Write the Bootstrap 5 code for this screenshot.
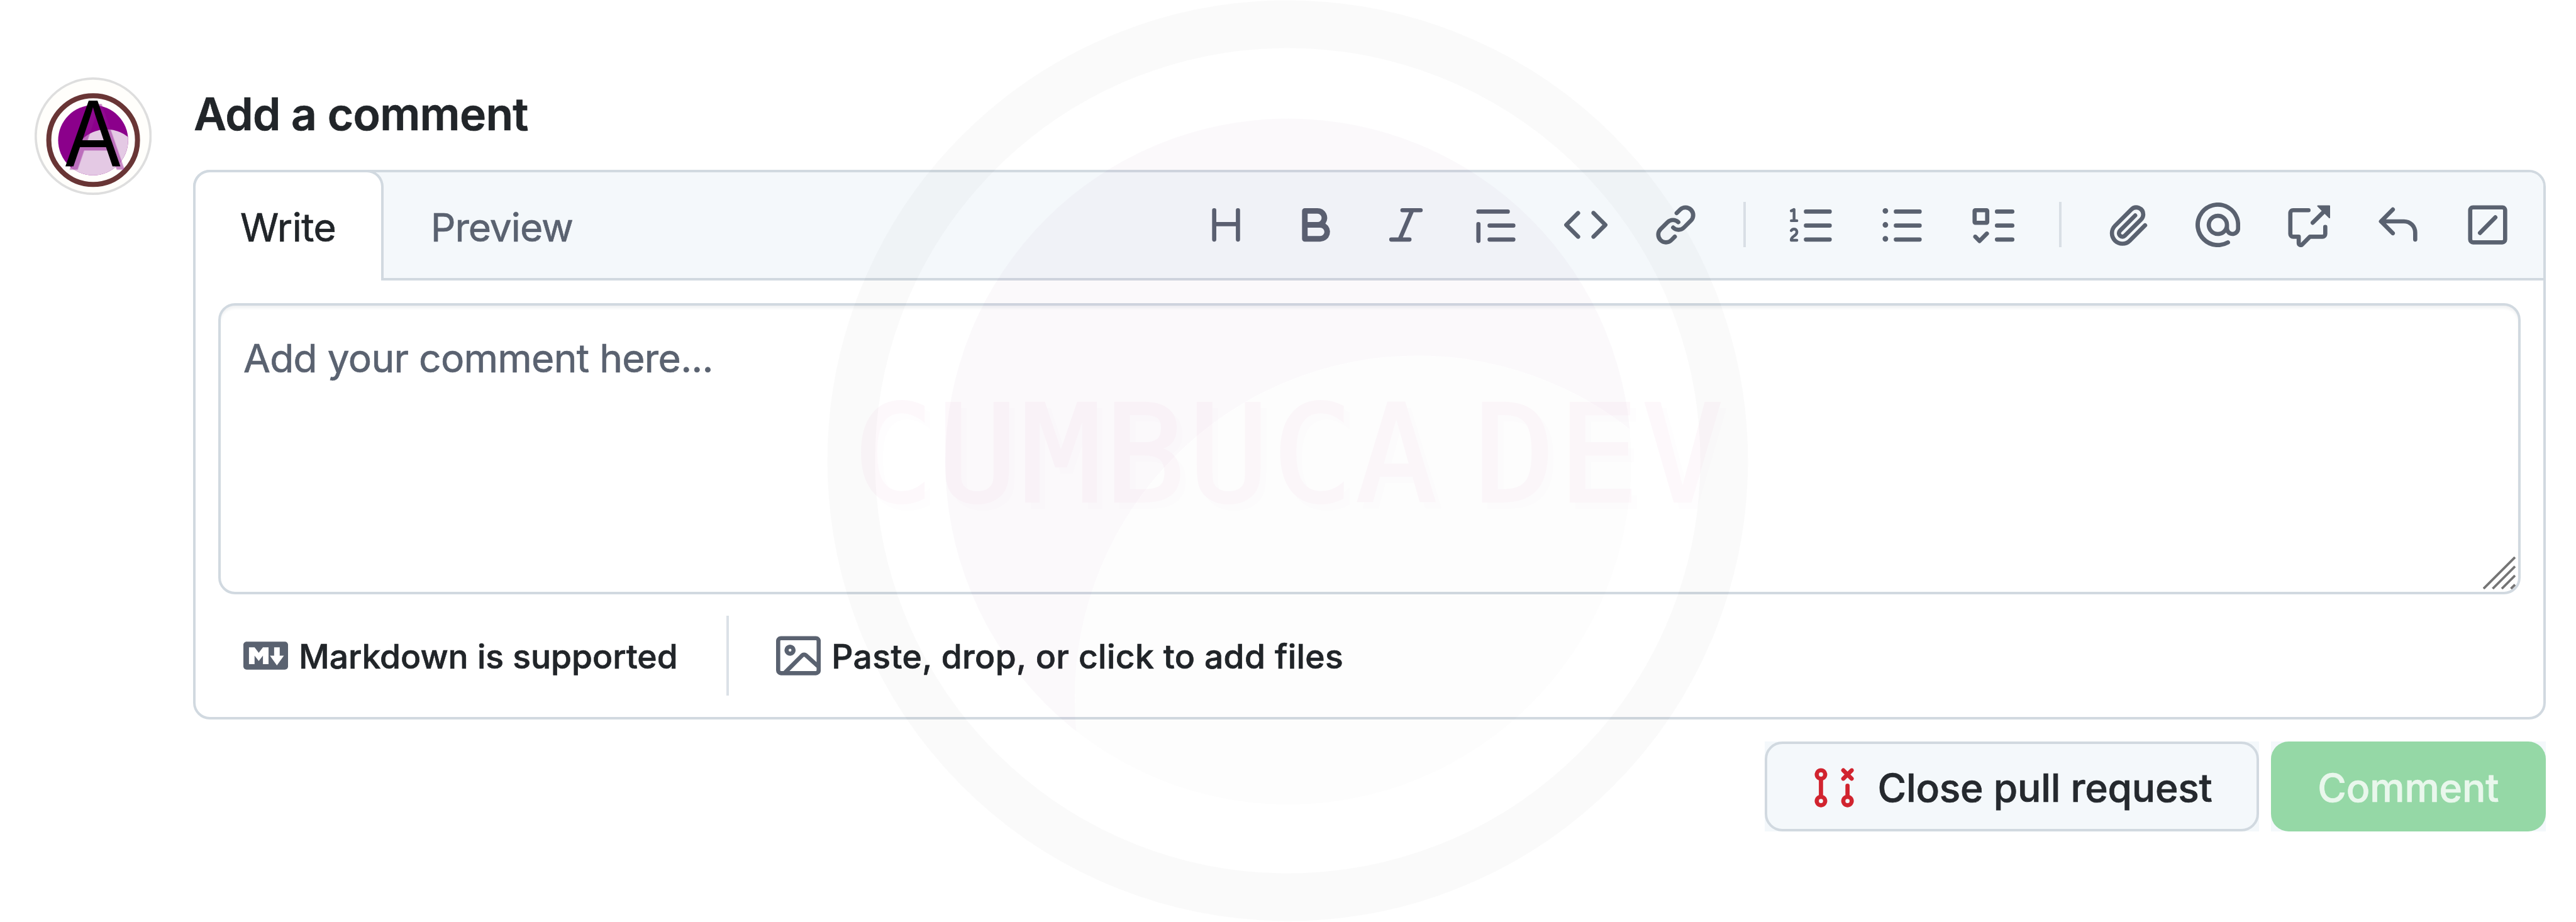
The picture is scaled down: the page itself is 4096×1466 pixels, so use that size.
<!DOCTYPE html>
<html lang="en">
<head>
<meta charset="utf-8">
<meta name="viewport" content="width=device-width, initial-scale=1">
<title>Add a comment</title>
<link href="https://cdn.jsdelivr.net/npm/bootstrap@5.3.0/dist/css/bootstrap.min.css" rel="stylesheet">
<style>
:root { --line: #d1d9e0; --ink: #212529; --mut: #5a6270; --band: #f4f8fb; }
body { font-family: Inter, "Noto Sans", sans-serif; font-size: 62.22px; line-height: 93.3px; color: var(--ink); background: #fff; height: 1466px; overflow: hidden; -webkit-text-stroke: .7px; }
svg { display: block; flex: none; }
.ico { width: 71.1px; height: 71.1px; fill: currentColor; }
.page-row { padding: 123.3px 48.4px 0 54.7px; gap: 65.7px; }
.avatar { width: 186.3px; height: 187.3px; }
.avatar-letter { filter: drop-shadow(10px 8px 0 rgba(148, 20, 148, .5)); }
.composer { min-width: 0; }
.title { font-size: 71.11px; font-weight: 600; line-height: 117.4px; letter-spacing: -.6px; margin: 0 0 29.3px 1.5px; color: var(--ink); }
.editor { border: 4px solid var(--line); border-radius: 26.7px; height: 873.6px; }
.editor-head { height: 172.4px; background: var(--band); border-bottom: 4px solid var(--line); border-radius: 22.7px 22.7px 0 0; }
.tab-write { width: 303px; margin: -4px 0 -4px -4px; border: 4px solid var(--line); border-bottom: 0; border-radius: 26.7px 26.7px 0 0; background: #fff; color: var(--ink); letter-spacing: -.5px; padding: 3px 0 0; }
.tab-preview { padding: 6.4px 0 0 75px; color: var(--mut); letter-spacing: -1px; background: none; border: 0; }
.tools { padding: 0 25.7px 2px 0; }
.tool-group { gap: 18.6px; }
.tool { width: 124.4px; height: 124.4px; padding: 0; border: 0; background: none; color: var(--mut); }
.tool-sep { width: 4px; height: 72px; background: #d9dfe5; margin: 0 43.5px 0 44.6px; }
.field { margin: 35.8px 35.2px 0 36.8px; height: 463px; }
.field textarea { resize: none; border: 4px solid var(--line); border-radius: 26.7px; padding: 36.7px 35.5px; font-size: 62.22px; line-height: 93.3px; letter-spacing: -.7px; box-shadow: inset 0 5px 4px -1px #f1f2f3; background: transparent; }
.field textarea::placeholder { color: var(--mut); opacity: 1; }
.grip { right: 8px; bottom: 8px; }
.editor-foot { height: 193.9px; padding-left: 76.3px; font-size: 53.33px; font-weight: 500; line-height: 80px; }
.foot-item { gap: 17px; }
.foot-item svg { color: var(--mut); }
.foot-item span { padding-top: 4px; }
.foot-sep { width: 4px; height: 127px; background: #dbe1e7; margin: 0 75.3px 0 77.2px; }
.drop { letter-spacing: .39px; }
.actions { margin-top: 35.8px; gap: 18.6px; }
.plate { background: var(--band); height: 142.2px; }
.plate .btn { height: 142.2px; border-radius: 28px; font-size: 62.22px; font-weight: 500; line-height: 93.3px; padding: 5px 0 0; }
.btn-close-pr { width: 786.7px; border: 4px solid var(--line); background: var(--band); color: #25292e; gap: 33.8px; letter-spacing: -.22px; --bs-btn-border-width: 4px; }
.btn-close-pr svg { color: #d1242f; }
.btn-send { width: 436.6px; border: 0; background: #95d8a6; color: #e9f7ec; letter-spacing: -.1px; }
.watermark { left: 0; top: 0; width: 4096px; height: 1466px; pointer-events: none; z-index: 5; }
.watermark-name { opacity: .025; }
.watermark-name text { filter: drop-shadow(9.5px 10px 0 rgba(120, 0, 130, .35)); }
</style>
</head>
<body class="position-relative">
<main class="d-flex align-items-start page-row">
  <svg class="avatar" viewBox="0 0 279.5 281">
    <defs><clipPath id="disc"><circle cx="139.7" cy="150" r="83.5"/></clipPath></defs>
    <ellipse cx="139.7" cy="140.3" rx="137" ry="137.4" fill="#fffefb" stroke="#dedede" stroke-width="5.6"/>
    <circle cx="139.7" cy="149.7" r="105.8" fill="#fffefb" stroke="#693535" stroke-width="12"/>
    <circle cx="139.7" cy="150" r="83.5" fill="#8b008b"/>
    <circle cx="171.5" cy="207.8" r="83.5" fill="#e4c9e4" clip-path="url(#disc)"/>
    <text class="avatar-letter" x="73.2" y="213.7" textLength="132" lengthAdjust="spacingAndGlyphs" font-family="Liberation Sans, sans-serif" font-size="229" fill="#000">A</text>
  </svg>

  <div class="composer flex-grow-1">
    <h2 class="title">Add a comment</h2>

    <section class="editor">
      <div class="editor-head d-flex">
        <button class="tab-write text-center" type="button">Write</button>
        <button class="tab-preview" type="button">Preview</button>
        <div class="tools d-flex align-items-center ms-auto">
          <div class="tool-group d-flex">
            <button class="tool d-flex align-items-center justify-content-center" type="button" aria-label="Heading"><svg class="ico" viewBox="0 0 16 16"><path d="M3.75 2a.75.75 0 0 1 .75.75V7h7V2.75a.75.75 0 0 1 1.5 0v10.5a.75.75 0 0 1-1.5 0V8.5h-7v4.75a.75.75 0 0 1-1.5 0V2.75A.75.75 0 0 1 3.75 2Z"/></svg></button>
            <button class="tool d-flex align-items-center justify-content-center" type="button" aria-label="Bold"><svg class="ico" viewBox="0 0 16 16"><path d="M4 2h4.5a3.501 3.501 0 0 1 2.852 5.53A3.499 3.499 0 0 1 9.5 14H4a1 1 0 0 1-1-1V3a1 1 0 0 1 1-1Zm1 7v3h4.5a1.5 1.5 0 0 0 0-3Zm3.5-2a1.5 1.5 0 0 0 0-3H5v3Z"/></svg></button>
            <button class="tool d-flex align-items-center justify-content-center" type="button" aria-label="Italic"><svg class="ico" viewBox="0 0 16 16"><path d="M6 2.75A.75.75 0 0 1 6.75 2h6.5a.75.75 0 0 1 0 1.5h-2.505l-3.858 9H9.25a.75.75 0 0 1 0 1.5h-6.5a.75.75 0 0 1 0-1.5h2.505l3.858-9H6.75A.75.75 0 0 1 6 2.75Z"/></svg></button>
            <button class="tool d-flex align-items-center justify-content-center" type="button" aria-label="Quote"><svg class="ico" viewBox="0 0 16 16"><path d="M1.75 2.5h10.5a.75.75 0 0 1 0 1.5H1.75a.75.75 0 0 1 0-1.5Zm4 5h8.5a.75.75 0 0 1 0 1.5h-8.5a.75.75 0 0 1 0-1.5Zm0 5h8.5a.75.75 0 0 1 0 1.5h-8.5a.75.75 0 0 1 0-1.5ZM2.5 7.75v6a.75.75 0 0 1-1.5 0v-6a.75.75 0 0 1 1.5 0Z"/></svg></button>
            <button class="tool d-flex align-items-center justify-content-center" type="button" aria-label="Code"><svg class="ico" viewBox="0 0 16 16"><path d="m11.28 3.22 4.25 4.25a.75.75 0 0 1 0 1.06l-4.25 4.25a.749.749 0 0 1-1.275-.326.749.749 0 0 1 .215-.734L13.94 8l-3.72-3.72a.749.749 0 0 1 .326-1.275.749.749 0 0 1 .734.215Zm-6.56 0a.751.751 0 0 1 1.042.018.751.751 0 0 1 .018 1.042L2.06 8l3.72 3.72a.749.749 0 0 1-.326 1.275.749.749 0 0 1-.734-.215L.47 8.53a.75.75 0 0 1 0-1.06Z"/></svg></button>
            <button class="tool d-flex align-items-center justify-content-center" type="button" aria-label="Link"><svg class="ico" viewBox="0 0 16 16"><path d="m7.775 3.275 1.25-1.25a3.5 3.5 0 1 1 4.95 4.95l-2.5 2.5a3.5 3.5 0 0 1-4.95 0 .751.751 0 0 1 .018-1.042.751.751 0 0 1 1.042-.018 1.998 1.998 0 0 0 2.83 0l2.5-2.5a2.002 2.002 0 0 0-2.83-2.83l-1.25 1.25a.751.751 0 0 1-1.042-.018.751.751 0 0 1-.018-1.042Zm-4.69 9.64a1.998 1.998 0 0 0 2.83 0l1.25-1.25a.751.751 0 0 1 1.042.018.751.751 0 0 1 .018 1.042l-1.25 1.25a3.5 3.5 0 1 1-4.95-4.95l2.5-2.5a3.5 3.5 0 0 1 4.95 0 .751.751 0 0 1-.018 1.042.751.751 0 0 1-1.042.018 1.998 1.998 0 0 0-2.83 0l-2.5 2.5a1.998 1.998 0 0 0 0 2.83Z"/></svg></button>
          </div>
          <div class="tool-sep"></div>
          <div class="tool-group d-flex">
            <button class="tool d-flex align-items-center justify-content-center" type="button" aria-label="Numbered list"><svg class="ico" viewBox="0 0 16 16"><path d="M5 3.25a.75.75 0 0 1 .75-.75h8.5a.75.75 0 0 1 0 1.5h-8.5A.75.75 0 0 1 5 3.25Zm0 5a.75.75 0 0 1 .75-.75h8.5a.75.75 0 0 1 0 1.5h-8.5A.75.75 0 0 1 5 8.25Zm0 5a.75.75 0 0 1 .75-.75h8.5a.75.75 0 0 1 0 1.5h-8.5a.75.75 0 0 1-.75-.75ZM.924 10.32a.5.5 0 0 1-.851-.525l.001-.001.001-.002.002-.004.007-.011c.097-.144.215-.273.348-.384.228-.19.588-.392 1.068-.392.468 0 .858.181 1.126.484.259.294.377.673.377 1.038 0 .987-.686 1.495-1.156 1.845l-.047.035c-.303.225-.522.4-.654.597h1.357a.5.5 0 0 1 0 1H.5a.5.5 0 0 1-.5-.5c0-1.005.692-1.52 1.167-1.875l.035-.025c.531-.396.8-.625.8-1.078a.57.57 0 0 0-.128-.376C1.806 10.068 1.695 10 1.5 10a.658.658 0 0 0-.429.163.835.835 0 0 0-.144.153ZM2.003 2.5V6h.503a.5.5 0 0 1 0 1H.5a.5.5 0 0 1 0-1h.503V3.308l-.28.14a.5.5 0 0 1-.446-.895l1.003-.5a.5.5 0 0 1 .723.447Z"/></svg></button>
            <button class="tool d-flex align-items-center justify-content-center" type="button" aria-label="Unordered list"><svg class="ico" viewBox="0 0 16 16"><path d="M5.75 2.5h8.5a.75.75 0 0 1 0 1.5h-8.5a.75.75 0 0 1 0-1.5Zm0 5h8.5a.75.75 0 0 1 0 1.5h-8.5a.75.75 0 0 1 0-1.5Zm0 5h8.5a.75.75 0 0 1 0 1.5h-8.5a.75.75 0 0 1 0-1.5ZM2 14a1 1 0 1 1 0-2 1 1 0 0 1 0 2Zm1-6a1 1 0 1 1-2 0 1 1 0 0 1 2 0ZM2 4a1 1 0 1 1 0-2 1 1 0 0 1 0 2Z"/></svg></button>
            <button class="tool d-flex align-items-center justify-content-center" type="button" aria-label="Task list"><svg class="ico" viewBox="0 0 16 16"><path d="M2 2h4a1 1 0 0 1 1 1v4a1 1 0 0 1-1 1H2a1 1 0 0 1-1-1V3a1 1 0 0 1 1-1Zm4.655 8.595a.75.75 0 0 1 0 1.06L4.03 14.28a.75.75 0 0 1-1.06 0l-1.5-1.5a.749.749 0 0 1 .326-1.275.749.749 0 0 1 .734.215l.97.97 2.095-2.095a.75.75 0 0 1 1.06 0ZM9.75 2.5h5.5a.75.75 0 0 1 0 1.5h-5.5a.75.75 0 0 1 0-1.5Zm0 5h5.5a.75.75 0 0 1 0 1.5h-5.5a.75.75 0 0 1 0-1.5Zm0 5h5.5a.75.75 0 0 1 0 1.5h-5.5a.75.75 0 0 1 0-1.5Zm-7.25-9v3h3v-3Z"/></svg></button>
          </div>
          <div class="tool-sep"></div>
          <div class="tool-group d-flex">
            <button class="tool d-flex align-items-center justify-content-center" type="button" aria-label="Attach files"><svg class="ico" viewBox="0 0 16 16"><path d="M12.212 3.02a1.753 1.753 0 0 0-2.478.003l-5.83 5.83a3.007 3.007 0 0 0-.88 2.127c0 .795.315 1.551.88 2.116.567.567 1.333.89 2.126.89.79 0 1.548-.321 2.116-.89l5.48-5.48a.75.75 0 0 1 1.061 1.06l-5.48 5.48a4.492 4.492 0 0 1-3.177 1.33c-1.2 0-2.345-.487-3.187-1.33a4.483 4.483 0 0 1-1.32-3.177c0-1.195.475-2.341 1.32-3.186l5.83-5.83a3.25 3.25 0 0 1 5.553 2.297c0 .863-.343 1.691-.953 2.301L7.439 12.39c-.375.377-.884.59-1.416.593a1.998 1.998 0 0 1-1.412-.593 1.992 1.992 0 0 1 0-2.828l5.48-5.48a.751.751 0 0 1 1.042.018.751.751 0 0 1 .018 1.042l-5.48 5.48a.492.492 0 0 0 0 .707.499.499 0 0 0 .352.154.51.51 0 0 0 .356-.154l5.833-5.827a1.755 1.755 0 0 0 0-2.481Z"/></svg></button>
            <button class="tool d-flex align-items-center justify-content-center" type="button" aria-label="Mention"><svg class="ico" viewBox="0 0 16 16"><path d="M4.75 2.37a6.501 6.501 0 0 0 6.5 11.26.75.75 0 0 1 .75 1.298A7.999 7.999 0 0 1 .989 4.148 8 8 0 0 1 16 7.75v1.5a2.75 2.75 0 0 1-5.072 1.475 3.999 3.999 0 0 1-6.65-4.19A4 4 0 0 1 12 8v1.25a1.25 1.25 0 0 0 2.5 0V7.867a6.5 6.5 0 0 0-9.75-5.496ZM10.5 8a2.5 2.5 0 1 0-5 0 2.5 2.5 0 0 0 5 0Z"/></svg></button>
            <button class="tool d-flex align-items-center justify-content-center" type="button" aria-label="Reference"><svg class="ico" viewBox="0 0 16 16"><path d="M2.75 3.5a.25.25 0 0 0-.25.25v7.5c0 .138.112.25.25.25h2a.75.75 0 0 1 .75.75v2.19l2.72-2.72a.749.749 0 0 1 .53-.22h4.5a.25.25 0 0 0 .25-.25v-2.5a.75.75 0 0 1 1.5 0v2.5A1.75 1.75 0 0 1 13.25 13H9.06l-2.573 2.573A1.458 1.458 0 0 1 4 14.543V13H2.75A1.75 1.75 0 0 1 1 11.25v-7.5C1 2.784 1.784 2 2.75 2h5.5a.75.75 0 0 1 0 1.5ZM16 1.25v4.146a.25.25 0 0 1-.427.177L14.03 4.03l-3.75 3.75a.749.749 0 0 1-1.275-.326.749.749 0 0 1 .215-.734l3.75-3.75-1.543-1.543A.25.25 0 0 1 11.604 1h4.146a.25.25 0 0 1 .25.25Z"/></svg></button>
            <button class="tool d-flex align-items-center justify-content-center" type="button" aria-label="Saved replies"><svg class="ico" viewBox="0 0 16 16"><path d="M6.78 1.97a.75.75 0 0 1 0 1.06L3.81 6h6.44A4.75 4.75 0 0 1 15 10.75v2.5a.75.75 0 0 1-1.5 0v-2.5a3.25 3.25 0 0 0-3.25-3.25H3.81l2.97 2.97a.749.749 0 0 1-.326 1.275.749.749 0 0 1-.734-.215L1.47 7.28a.75.75 0 0 1 0-1.06l4.25-4.25a.75.75 0 0 1 1.06 0Z"/></svg></button>
            <button class="tool d-flex align-items-center justify-content-center" type="button" aria-label="Slash commands"><svg class="ico" viewBox="0 0 16 16"><path d="M13.25 1c.966 0 1.75.784 1.75 1.75v10.5A1.75 1.75 0 0 1 13.25 15H2.75A1.75 1.75 0 0 1 1 13.25V2.75C1 1.784 1.784 1 2.75 1ZM2.75 2.5a.25.25 0 0 0-.25.25v10.5c0 .138.112.25.25.25h10.5a.25.25 0 0 0 .25-.25V2.75a.25.25 0 0 0-.25-.25Z"/><path d="M5.25 10.9 10.75 5.3" fill="none" stroke="currentColor" stroke-width="1.5" stroke-linecap="round"/></svg></button>
          </div>
        </div>
      </div>

      <div class="field position-relative">
        <textarea class="form-control w-100 h-100" placeholder="Add your comment here..."></textarea>
        <svg class="grip position-absolute" width="52" height="52" viewBox="0 0 52 52" stroke="#757575" stroke-width="3.8"><path d="M1 51 51 1M15.5 51 51 15.5M30 51 51 30M44.5 51 51 44.5"/></svg>
      </div>

      <div class="editor-foot d-flex align-items-center">
        <div class="foot-item d-flex align-items-center"><svg class="ico" viewBox="0 0 16 16"><path d="M14.85 3c.63 0 1.15.52 1.14 1.15v7.7c0 .63-.51 1.15-1.15 1.15H1.15C.52 13 0 12.48 0 11.84V4.15C0 3.52.52 3 1.15 3ZM9 11V5H7L5.5 7 4 5H2v6h2V8l1.5 1.92L7 8v3Zm2.99.5L14.5 8H13V5h-2v3H9.5Z"/></svg><span>Markdown is supported</span></div>
        <div class="foot-sep"></div>
        <div class="foot-item d-flex align-items-center"><svg class="ico" viewBox="0 0 16 16"><path d="M16 13.25A1.75 1.75 0 0 1 14.25 15H1.75A1.75 1.75 0 0 1 0 13.25V2.75C0 1.784.784 1 1.75 1h12.5c.966 0 1.75.784 1.75 1.75ZM1.75 2.5a.25.25 0 0 0-.25.25v10.5c0 .138.112.25.25.25h.94l.03-.03 6.077-6.078a1.75 1.75 0 0 1 2.412-.06L14.5 10.31V2.75a.25.25 0 0 0-.25-.25Zm12.5 11a.25.25 0 0 0 .25-.25v-.917l-4.298-3.889a.25.25 0 0 0-.344.009L4.81 13.5ZM7 6a2 2 0 1 1-3.999.001A2 2 0 0 1 7 6ZM5.5 6a.5.5 0 1 0-1 0 .5.5 0 0 0 1 0Z"/></svg><span class="drop">Paste, drop, or click to add files</span></div>
      </div>
    </section>

    <div class="actions d-flex justify-content-end">
      <div class="plate"><button class="btn btn-close-pr d-flex align-items-center justify-content-center" type="button"><svg class="ico" viewBox="0 0 16 16"><path d="M3.25 1A2.25 2.25 0 0 1 4 5.372v5.256a2.251 2.251 0 1 1-1.5 0V5.372A2.251 2.251 0 0 1 3.25 1Zm9.5 5.5a.75.75 0 0 1 .75.75v3.378a2.251 2.251 0 1 1-1.5 0V7.25a.75.75 0 0 1 .75-.75Zm-2.03-5.273a.75.75 0 0 1 1.06 0l.97.97.97-.97a.748.748 0 0 1 1.265.332.75.75 0 0 1-.205.729l-.97.97.97.97a.751.751 0 0 1-.018 1.042.751.751 0 0 1-1.042.018l-.97-.97-.97.97a.749.749 0 0 1-1.275-.326.749.749 0 0 1 .215-.734l.97-.97-.97-.97a.75.75 0 0 1 0-1.06ZM2.5 3.25a.75.75 0 1 0 1.5 0 .75.75 0 0 0-1.5 0ZM3.25 12a.75.75 0 1 0 0 1.5.75.75 0 0 0 0-1.5Zm9.5 0a.75.75 0 1 0 0 1.5.75.75 0 0 0 0-1.5Z"/></svg><span>Close pull request</span></button></div>
      <div class="plate"><button class="btn btn-send" type="button">Comment</button></div>
    </div>
  </div>
</main>

<!-- Translucent community badge laid over the whole form -->
<svg class="watermark position-absolute" viewBox="0 0 4096 1466">
  <defs>
    <mask id="cut"><rect width="4096" height="1466" fill="#fff"/><circle cx="2254" cy="1110.5" r="545" fill="#000"/></mask>
    <clipPath id="wdisc"><circle cx="2048.5" cy="734" r="545.5"/></clipPath>
  </defs>
  <circle cx="2047.5" cy="732.5" r="694" fill="none" stroke="#000" stroke-width="76" opacity=".018"/>
  <circle cx="2048.5" cy="734" r="545.5" fill="#640078" opacity=".019" mask="url(#cut)"/>
  <circle cx="2254" cy="1110.5" r="545" fill="#000" opacity=".007" clip-path="url(#wdisc)"/>
  <g class="watermark-name" font-family="DejaVu Sans Mono, monospace" font-size="213.3" text-anchor="middle">
    <text x="1420.6 1553.9 1687.2 1820.5 1953.8 2087.1 2220.3 2314 2408.5 2541.5 2675.5" y="796.5" fill="#be0082" stroke="#be0082" stroke-width="4">CUMBUCA DEV</text>
  </g>
</svg>
<script src="https://cdn.jsdelivr.net/npm/bootstrap@5.3.0/dist/js/bootstrap.bundle.min.js"></script>
</body>
</html>
